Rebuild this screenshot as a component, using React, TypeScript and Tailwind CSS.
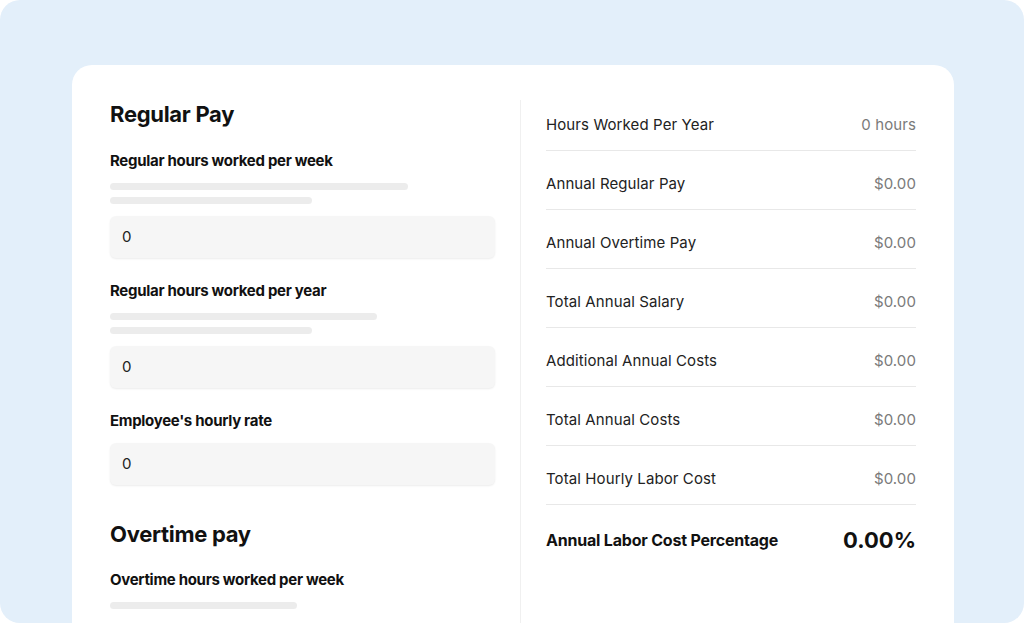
const fieldGroups = [
  { label: "Regular hours worked per week", hints: ["w-[298px]", "w-[202px]"], value: "0" },
  { label: "Regular hours worked per year", hints: ["w-[267px]", "w-[202px]"], value: "0" },
  { label: "Employee's hourly rate", hints: [], value: "0" },
];

const summary = [
  { label: "Hours Worked Per Year", value: "0 hours" },
  { label: "Annual Regular Pay", value: "$0.00" },
  { label: "Annual Overtime Pay", value: "$0.00" },
  { label: "Total Annual Salary", value: "$0.00" },
  { label: "Additional Annual Costs", value: "$0.00" },
  { label: "Total Annual Costs", value: "$0.00" },
  { label: "Total Hourly Labor Cost", value: "$0.00" },
];

const HintBars = ({ widths }: { widths: string[] }) => (
  <div className="mt-3 flex flex-col gap-[7px]">
    {widths.map((w, i) => (
      <div key={i} className={`h-[7px] rounded-full bg-[#ececec] ${w}`} />
    ))}
  </div>
);

const Field = ({ label, hints, value }: { label: string; hints: string[]; value: string }) => (
  <div className="mt-[23px]">
    <div className="text-[15px] font-bold leading-5 tracking-[-0.3px] text-[#111]">{label}</div>
    {hints.length > 0 && <HintBars widths={hints} />}
    <div className="mt-3 flex h-[42px] items-center rounded-md bg-[#f6f6f6] px-3 text-[15px] text-[#222] shadow-[0_1px_2px_rgba(0,0,0,0.08)]">
      {value}
    </div>
  </div>
);

export default function App() {
  return (
    <div className="h-[623px] w-[1024px] overflow-hidden bg-white" style={{ fontFamily: "Inter, 'Liberation Sans', sans-serif" }}>
      <div className="flex h-full flex-col overflow-hidden rounded-[20px] bg-[#e3effa] pl-[72px] pr-[70px] pt-[65px]">
        <div className="flex flex-1 rounded-t-[20px] bg-white px-[38px] pt-[35px]">
          {/* calculator inputs */}
          <div className="w-[385px] shrink-0">
            <h2 className="text-[22px] font-bold leading-7 tracking-[-0.3px] text-[#111]">Regular Pay</h2>
            {fieldGroups.map((f) => (
              <Field key={f.label} {...f} />
            ))}
            <h2 className="mt-[35px] text-[22px] font-bold leading-7 tracking-[-0.3px] text-[#111]">Overtime pay</h2>
            <div className="mt-[22px] text-[15px] font-bold leading-5 tracking-[-0.3px] text-[#111]">
              Overtime hours worked per week
            </div>
            <HintBars widths={["w-[187px]"]} />
          </div>

          <div className="mx-[25px] w-px bg-[#f0f0f0]" />

          {/* results */}
          <div className="flex-1">
            {summary.map((row, i) => (
              <div
                key={row.label}
                className={`flex items-center justify-between border-b border-[#e8e8e8] pb-[15px] text-[15px] leading-5 tracking-[0.1px] ${i === 0 ? "pt-[15px]" : "pt-[23px]"}`}
              >
                <span className="text-[#222]">{row.label}</span>
                <span className="text-[#7a7a7a]">{row.value}</span>
              </div>
            ))}
            <div className="flex items-center justify-between pt-[21px]">
              <span className="text-[16px] font-bold leading-5 tracking-[-0.2px] text-[#111]">Annual Labor Cost Percentage</span>
              <span className="text-[22px] font-bold leading-7 text-[#111]">0.00%</span>
            </div>
          </div>
        </div>
      </div>
    </div>
  );
}
